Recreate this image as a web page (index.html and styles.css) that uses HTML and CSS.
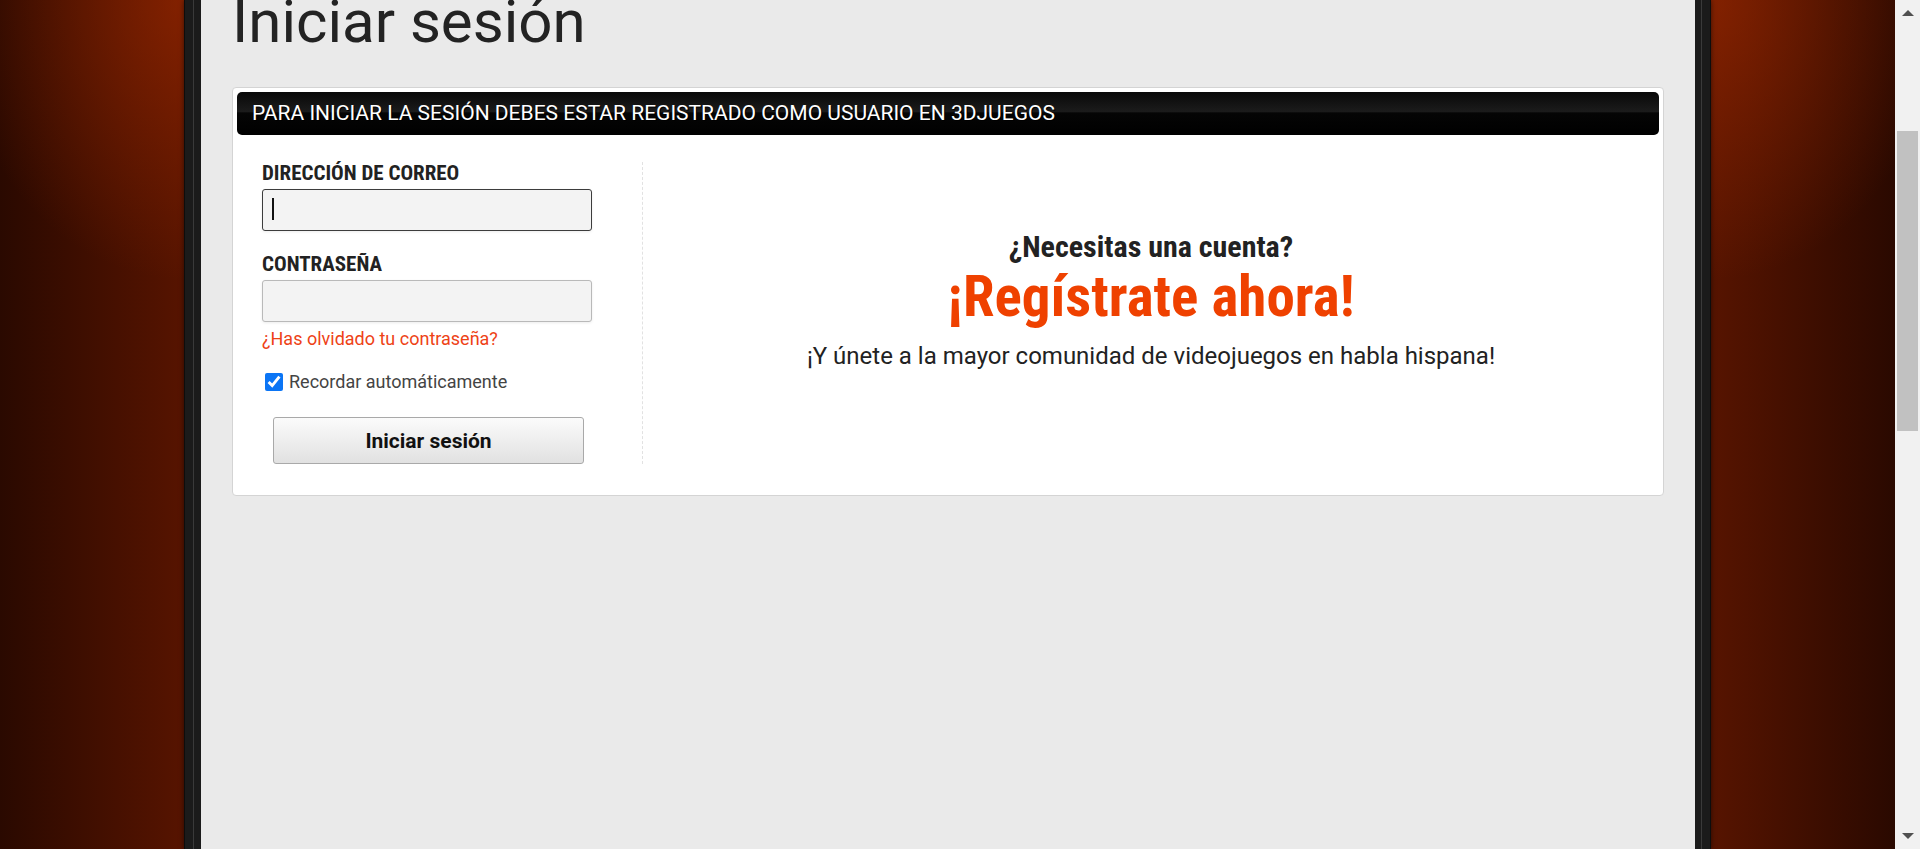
FILE: index.html
```html
<!DOCTYPE html>
<html lang="es">
<head>
<meta charset="utf-8">
<title>Iniciar sesión - 3DJuegos</title>
<link rel="stylesheet" href="styles.css">
</head>
<body>
<div class="site">
  <div class="frame">
    <div class="rail rail-left"></div>
    <main class="content">
      <h1 class="title">Iniciar sesión</h1>
      <section class="card">
        <div class="card-bar">PARA INICIAR LA SESIÓN DEBES ESTAR REGISTRADO COMO USUARIO EN 3DJUEGOS</div>
        <div class="card-body">
          <form class="login">
            <label class="field-label" for="email">DIRECCIÓN DE CORREO</label>
            <div class="field is-focused">
              <input class="field-input" id="email" type="text">
              <span class="caret"></span>
            </div>
            <label class="field-label" for="pass">CONTRASEÑA</label>
            <div class="field">
              <input class="field-input" id="pass" type="password">
            </div>
            <a class="forgot" href="#">¿Has olvidado tu contraseña?</a>
            <label class="remember"><input class="remember-box" type="checkbox" checked> <span>Recordar automáticamente</span></label>
            <button class="submit" type="button">Iniciar sesión</button>
          </form>
          <div class="promo">
            <p class="promo-q">¿Necesitas una cuenta?</p>
            <p class="promo-cta">¡Regístrate ahora!</p>
            <p class="promo-sub">¡Y únete a la mayor comunidad de videojuegos en habla hispana!</p>
          </div>
        </div>
      </section>
    </main>
    <div class="rail rail-right"></div>
  </div>
</div>
<div class="scrollbar">
  <span class="sb-arrow sb-up"></span>
  <div class="sb-track"><div class="sb-thumb"></div></div>
  <span class="sb-arrow sb-down"></span>
</div>
</body>
</html>
```

FILE: styles.css
```css
* { box-sizing: border-box; }

html, body {
  margin: 0;
  height: 100%;
  overflow: hidden;
}

body {
  display: flex;
  font-family: Roboto, "Liberation Sans", Arial, sans-serif;
  color: #222;
}

.site {
  flex: 1;
  display: flex;
  justify-content: center;
  background:
    radial-gradient(230px 280px at 184px 0, rgba(175, 46, 0, .5), rgba(175, 46, 0, 0) 100%),
    radial-gradient(230px 280px at calc(100% - 184px) 0, rgba(175, 46, 0, .5), rgba(175, 46, 0, 0) 100%),
    linear-gradient(90deg, #2a0900 0, #571400 184px, #571400 calc(100% - 184px), #2a0900 100%);
}

.frame {
  width: 1527px;
  display: flex;
  box-shadow: 0 0 5px rgba(0, 0, 0, .55);
}

.rail { flex: none; }

.rail-left {
  width: 17px;
  background: linear-gradient(90deg, #0d0d0d 0 1px, #1b1b1b 1px 9px, #3a3a3a 9px 10px, #1b1b1b 10px);
}

.rail-right {
  width: 16px;
  background: linear-gradient(90deg, #1b1b1b 0 6px, #3a3a3a 6px 7px, #1b1b1b 7px 15px, #0d0d0d 15px);
}

.content {
  flex: 1;
  background: #eaeaea;
  padding: 0 31px;
}

.title {
  margin: -14px 0 29px;
  font-size: 60px;
  line-height: 72px;
  font-weight: 400;
  color: #232323;
}

.card {
  background: #fff;
  border: 1px solid #d4d4d4;
  border-radius: 4px;
  padding: 4px;
}

.card-bar {
  height: 43px;
  border-radius: 5px;
  background: linear-gradient(#080808 0%, #1c1c1c 47%, #050505 48%, #000 100%);
  color: #fff;
  font-size: 21px;
  line-height: 43px;
  padding-left: 15px;
  text-shadow: 1px 1px 0 #000;
  white-space: nowrap;
}

.card-body {
  display: flex;
  padding: 27px 0 27px 25px;
}

.login {
  width: 380px;
  padding-right: 50px;
  display: flex;
  flex-direction: column;
}

.field-label {
  font-stretch: condensed;
  font-weight: 700;
  font-size: 21px;
  line-height: 22px;
  color: #222;
  margin-bottom: 5px;
}

.field {
  position: relative;
  margin-bottom: 22px;
}

.field-input {
  display: block;
  width: 330px;
  height: 42px;
  border: 1px solid #b9b9b9;
  border-radius: 3px;
  background: #f3f3f3;
  box-shadow: 0 1px 3px rgba(0, 0, 0, .08);
  font: inherit;
  outline: none;
}

.is-focused .field-input {
  border-color: #3c3c3c;
}

.caret {
  position: absolute;
  left: 10px;
  top: 9px;
  width: 2px;
  height: 22px;
  background: #111;
}

.forgot {
  margin-top: -15px;
  font-size: 18px;
  line-height: 20px;
  color: #ee4216;
  text-decoration: none;
}

.remember {
  display: flex;
  align-items: center;
  gap: 6px;
  margin-top: 22px;
  font-size: 18px;
  line-height: 22px;
  color: #444;
}

.remember-box {
  width: 18px;
  height: 18px;
  margin: 0 0 0 3px;
  accent-color: #0b75f5;
}

.submit {
  align-self: flex-start;
  margin: 24px 0 0 11px;
  width: 311px;
  height: 47px;
  border: 1px solid #a9a9a9;
  border-radius: 3px;
  background: linear-gradient(#fbfbfb, #e1e1e1);
  font-family: Roboto, sans-serif;
  font-weight: 700;
  font-size: 21px;
  color: #111;
}

.promo {
  flex: 1;
  border-left: 1px dashed #e2e2e2;
  text-align: center;
  padding-top: 67px;
}

.promo p { margin: 0; }

.promo-q {
  font-stretch: condensed;
  font-weight: 700;
  font-size: 30px;
  line-height: 36px;
  color: #222;
}

.promo-cta {
  font-stretch: condensed;
  font-weight: 700;
  font-size: 57px;
  line-height: 64px;
  color: #ef4100;
}

.promo .promo-sub {
  margin-top: 12px;
  font-size: 24px;
  line-height: 30px;
  color: #222;
}

.scrollbar {
  width: 25px;
  flex: none;
  background: #f1f1f1;
  display: flex;
  flex-direction: column;
  align-items: center;
}

.sb-arrow {
  width: 0;
  height: 0;
  border-left: 6px solid transparent;
  border-right: 6px solid transparent;
}

.sb-up {
  margin-top: 10px;
  border-bottom: 6px solid #505050;
}

.sb-down {
  margin-bottom: 10px;
  border-top: 6px solid #505050;
}

.sb-track {
  flex: 1;
  width: 100%;
  padding: 115px 2px 0;
}

.sb-thumb {
  height: 300px;
  background: #c1c1c1;
}
```
